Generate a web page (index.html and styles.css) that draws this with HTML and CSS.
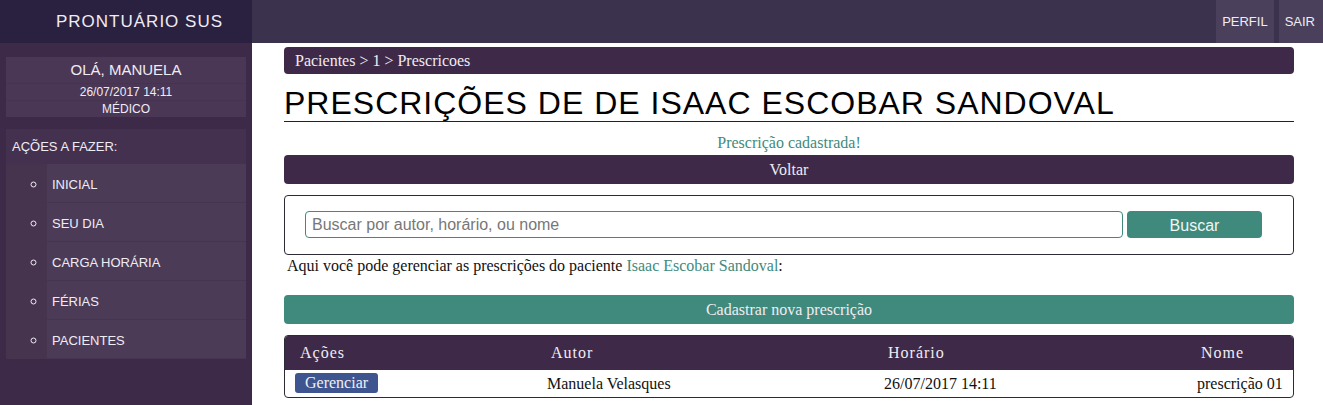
FILE: index.html
```html
<!DOCTYPE html>
<html lang="pt-BR">
<head>
<meta charset="utf-8">
<title>Prontuário SUS</title>
<link rel="stylesheet" href="styles.css">
</head>
<body>
<header class="topbar">
  <div class="brand">PRONTUÁRIO SUS</div>
  <nav class="topnav">
    <a class="topnav-item" href="#">PERFIL</a>
    <a class="topnav-item" href="#">SAIR</a>
  </nav>
</header>
<div class="layout">
  <aside class="sidebar">
    <div class="user-box">
      <div class="user-row user-name">OLÁ, MANUELA</div>
      <div class="user-row user-small">26/07/2017 14:11</div>
      <div class="user-row user-small">MÉDICO</div>
    </div>
    <div class="actions-box">
      <div class="actions-title">AÇÕES A FAZER:</div>
      <ul class="actions-list">
        <li>INICIAL</li>
        <li>SEU DIA</li>
        <li>CARGA HORÁRIA</li>
        <li>FÉRIAS</li>
        <li>PACIENTES</li>
      </ul>
    </div>
  </aside>
  <main class="main">
    <div class="breadcrumb">Pacientes &gt; 1 &gt; Prescricoes</div>
    <h1 class="title">PRESCRIÇÕES DE DE ISAAC ESCOBAR SANDOVAL</h1>
    <p class="flash">Prescrição cadastrada!</p>
    <div class="bar bar-dark">Voltar</div>
    <form class="search-box">
      <input class="search-input" type="text" placeholder="Buscar por autor, horário, ou nome">
      <button class="search-btn" type="button">Buscar</button>
    </form>
    <p class="intro">Aqui você pode gerenciar as prescrições do paciente <span class="teal">Isaac Escobar Sandoval</span>:</p>
    <div class="bar bar-teal">Cadastrar nova prescrição</div>
    <div class="table">
      <div class="thead">
        <div class="th c1">Ações</div>
        <div class="th c2">Autor</div>
        <div class="th c3">Horário</div>
        <div class="th c4">Nome</div>
      </div>
      <div class="trow">
        <div class="td c1"><span class="btn-manage">Gerenciar</span></div>
        <div class="td c2">Manuela Velasques</div>
        <div class="td c3">26/07/2017 14:11</div>
        <div class="td c4">prescrição 01</div>
      </div>
    </div>
  </main>
</div>
</body>
</html>
```

FILE: styles.css
```css
* { box-sizing: border-box; }
html, body { margin: 0; padding: 0; }
body {
  background: #ffffff;
  font-family: "Liberation Serif", "Times New Roman", serif;
  font-size: 16px;
  color: #111;
  height: 405px;
  overflow: hidden;
}

.topbar {
  display: flex;
  height: 43px;
  background: #3b324d;
}
.brand {
  width: 252px;
  background: #2a2040;
  color: #f0ecf3;
  font-family: "Liberation Sans", Arial, sans-serif;
  font-size: 17px;
  letter-spacing: 1px;
  text-align: center;
  line-height: 43px;
  padding-left: 27px;
}
.topnav {
  flex: 1;
  display: flex;
  justify-content: flex-end;
  gap: 5px;
}
.topnav-item {
  display: block;
  background: #4a405c;
  color: #f0ecf3;
  font-family: "Liberation Sans", Arial, sans-serif;
  font-size: 13px;
  line-height: 43px;
  padding: 0 6px;
  text-decoration: none;
}
.topnav-item:last-child { padding-right: 8px; }

.layout {
  display: flex;
  height: 362px;
}
.sidebar {
  width: 252px;
  background: #3d2a48;
  padding: 14px 6px 0 6px;
  font-family: "Liberation Sans", Arial, sans-serif;
  color: #f0ecf3;
}
.user-box {
  background: #463351;
  display: flex;
  flex-direction: column;
  gap: 1px;
}
.user-row {
  background: #4a3756;
  text-align: center;
}
.user-name {
  font-size: 15px;
  height: 26px;
  line-height: 26px;
}
.user-small {
  font-size: 12px;
  height: 16px;
  line-height: 16px;
}
.actions-box {
  margin-top: 12px;
  background: #443150;
}
.actions-title {
  font-size: 13px;
  height: 35px;
  line-height: 36px;
  padding-left: 6px;
}
.actions-list {
  margin: 0;
  padding: 0 0 0 41px;
  list-style: circle;
  background: #46344f;
}
.actions-list li {
  height: 39px;
  line-height: 39px;
  font-size: 13px;
  background: #4c3b57;
  padding-left: 5px;
  border-bottom: 1px solid #463450;
}
.actions-list li::marker { font-size: 15px; }

.main {
  flex: 1;
  padding: 4px 29px 0 32px;
}
.breadcrumb {
  background: #3e2a48;
  color: #f0ecf3;
  border-radius: 4px;
  height: 27px;
  line-height: 27px;
  padding-left: 11px;
}
.title {
  margin: 0;
  font-family: "Liberation Sans", Arial, sans-serif;
  font-weight: normal;
  font-size: 32px;
  letter-spacing: 1px;
  line-height: 37px;
  height: 48px;
  padding-top: 11px;
  border-bottom: 1px solid #222;
  color: #000;
}
.flash {
  margin: 0;
  height: 33px;
  line-height: 42px;
  text-align: center;
  color: #3f8a7c;
}
.bar {
  height: 29px;
  line-height: 29px;
  border-radius: 4px;
  text-align: center;
  color: #f0ecf3;
}
.bar-dark { background: #3e2a48; }
.bar-teal { background: #3f8a7c; margin-top: 18px; }

.search-box {
  margin: 11px 0 0 0;
  height: 60px;
  border: 1px solid #2b2b35;
  border-radius: 4px;
  padding: 15px 31px 0 20px;
  display: flex;
  gap: 4px;
}
.search-input {
  flex: 1;
  height: 27px;
  border: 1px solid #3f8a7c;
  border-radius: 4px;
  font-family: "Liberation Sans", Arial, sans-serif;
  font-size: 16px;
  padding: 0 6px;
  color: #333;
}
.search-input::placeholder { color: #777; }
.search-btn {
  width: 135px;
  height: 27px;
  border: none;
  border-radius: 4px;
  background: #3f8a7c;
  color: #f0f6f4;
  font-family: "Liberation Sans", Arial, sans-serif;
  font-size: 16px;
  padding: 2px 0 0 0;
}
.intro {
  margin: 0;
  padding-left: 3px;
  line-height: 22px;
}
.teal { color: #3f8a7c; }

.table {
  margin-top: 11px;
  border: 1px solid #2b2b35;
  border-radius: 4px;
  overflow: hidden;
}
.thead, .trow {
  display: grid;
  grid-template-columns: 258px 337px 313px 1fr;
}
.thead {
  background: #3e2a48;
  color: #f0ecf3;
  height: 34px;
  line-height: 34px;
  letter-spacing: 1px;
}
.th { padding-left: 8px; }
.th.c1 { padding-left: 15px; }
.trow {
  height: 27px;
  line-height: 27px;
}
.td { padding-left: 4px; }
.td.c1 { padding-left: 10px; }
.btn-manage {
  display: inline-block;
  background: #3e5590;
  color: #eef0f6;
  border-radius: 3px;
  height: 20px;
  line-height: 20px;
  padding: 0 10px;
  vertical-align: 1px;
}
```
